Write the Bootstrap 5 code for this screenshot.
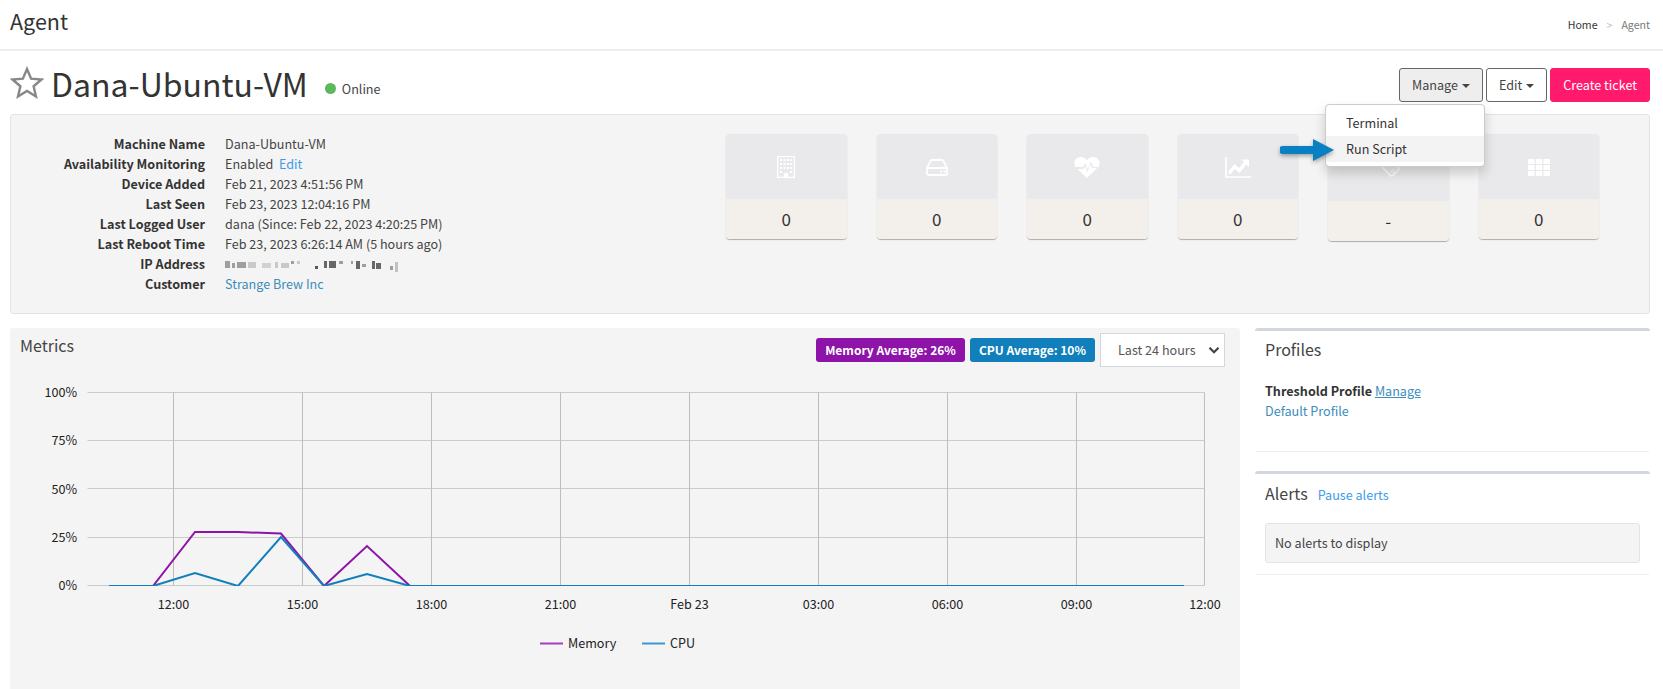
<!DOCTYPE html>
<html lang="en">
<head>
<meta charset="utf-8">
<title>Agent</title>
<link href="https://cdn.jsdelivr.net/npm/bootstrap@5.3.0/dist/css/bootstrap.min.css" rel="stylesheet">
<style>
html,body{height:689px;overflow:hidden}
body{font-family:"Noto Sans CJK SC","Noto Sans",sans-serif;font-size:12.6px;line-height:20px;color:#333;background:#fff}
a{text-decoration:none}
.top-head{height:51px;padding:0 13px 0 10px;border-bottom:2px solid #eee}
.top-title{font-size:21.5px;line-height:34px;font-weight:400;margin:0 0 8px;color:#333}
.crumbs{font-size:10.6px;color:#777}
.crumbs span{color:#bbb;margin:0 9px}
.crumbs b{font-weight:400;color:#333}
.page-body{padding:0 13px 0 10px}
.title-row{height:63px}
.host-name{font-size:32px;line-height:44px;font-weight:400;margin:0 0 0 7px;color:#333}
.state-dot{width:11px;height:11px;border-radius:50%;background:#5cb85c;margin:0 6px 0 17px}
.state-wrap{margin-top:12px;color:#444}
.tool-btn{font-size:12.6px;line-height:20px;padding:6px 12px;height:34px;border:1px solid #666;border-radius:3px;color:#444;background:#fff}
.tool-btn:hover{color:#444;background:#fff;border-color:#666}
.tool-btn.on{background:#eee}
.tool-btn.on:hover{background:#eee}
.tool-btn::after{border-top-color:#444;vertical-align:2px;margin-left:4px;border-width:4px 4px 0}
.ticket-btn{height:34px;padding:6px 12px;font-size:12.6px;line-height:20px;background:#ff1a6e;border:1px solid #ff1a6e;border-radius:3px;color:#fff}
.ticket-btn:hover{background:#ff1a6e;color:#fff;border-color:#ff1a6e}
.btn-cluster{gap:3px;position:relative;margin-top:5px}
.tool-menu{display:block;position:absolute;top:36px;right:165px;left:auto;width:160px;min-width:0;padding:5px 0 4px;border:1px solid #ccc;border-radius:4px;box-shadow:0 6px 12px rgba(0,0,0,.175);font-size:12.6px;margin:0;z-index:5}
.tool-menu .dropdown-item{padding:3px 20px;line-height:20px;height:26px;color:#333}
.tool-menu .dropdown-item.hot{background:#f3f3f3}
.point-arrow{position:absolute;left:-46px;top:33px;width:56px;height:24px;filter:drop-shadow(0 2px 2px rgba(0,0,0,.35))}
.info-panel{height:200px;background:#f4f4f4;border:1px solid #e3e3e3;border-radius:3px;padding:19px 50px 0 0}
.facts{width:700px}
.fact-row{height:20px}
.fact-key{width:194px;text-align:right;font-weight:600;color:#333;flex:none}
.fact-val{margin-left:20px;color:#444;white-space:nowrap}
.blue-a{color:#3c8dbc}
.bright-a{color:#3c9ce8}
.tiles{gap:30px;flex:1;justify-content:flex-end;align-items:flex-start}
.tile{width:120.5px;border-radius:4px;overflow:hidden;box-shadow:0 1px 1px rgba(0,0,0,.3);flex:none}
.tile-top{height:65px;background:#e9e9eb;color:#fff}
.tile-top svg{width:26px;height:26px}
.tile-num{height:40px;background:#f3efeb;font-size:17px;line-height:40px;text-align:center;color:#333}
.tile-tall .tile-top{height:67px}
.main-row{gap:15px;margin-top:14px}
.metrics-box{width:1230px;height:361px;background:#f4f4f4;border-radius:3px 3px 0 0;flex:none;padding:5px 15px 0 10px}
.box-title{font-size:16px;line-height:24px;font-weight:400;margin:0 0 8px;color:#444}
.badge-set{gap:5px}
.avg-badge{font-size:12px;font-weight:600;color:#fff;height:24px;line-height:24px;padding:0 9px;border-radius:3px;white-space:nowrap}
.avg-mem{background:#8e13a8}
.avg-cpu{background:#107fbb}
.range-pick{width:125px;height:34px;border:1px solid #d2d6de;border-radius:0;font-size:12.6px;padding:5px 12px 5px 17px;color:#555;background-color:#fff;margin-left:0;line-height:20px;flex:none;background-position:right 4px center;background-size:12px 12px;background-image:url("data:image/svg+xml,%3csvg xmlns='http://www.w3.org/2000/svg' viewBox='0 0 16 16'%3e%3cpath fill='none' stroke='%23444' stroke-width='3' d='M2 5l6 6 6-6'/%3e%3c/svg%3e")}
.chart-svg{display:block;margin:-5px 0 0 -20px}
.chart-svg text{font-family:"Noto Sans CJK SC","Noto Sans",sans-serif;font-size:12.6px;fill:#222}
.side-col{flex:1;min-width:0}
.side-card{border-top:3px solid #d2d6de;border-bottom:1px solid #eee;border-radius:3px;padding:0 10px}
.side-card.prof{height:124px}
.side-card.alrt{height:104px;margin-top:19px}
.side-head{font-size:16px;line-height:24px;font-weight:400;margin:0;color:#444}
.prof-top{margin-top:6px}
.prof-lines{margin-top:20px}
.alrt-top{margin-top:7px}
.pause-link{margin:4px 0 0 10px}
.none-box{background:#f4f4f4;border:1px solid #e3e3e3;border-radius:3px;height:40px;padding:9px 9px;color:#444;margin-top:18px}
.key-bold{font-weight:700;color:#333}
.u-line{text-decoration:underline}
.ip-blur{filter:blur(.6px)}
</style>
</head>
<body>
<header class="top-head d-flex justify-content-between align-items-center">
  <h1 class="top-title">Agent</h1>
  <div class="crumbs"><b>Home</b><span>&gt;</span>Agent</div>
</header>
<main class="page-body">
  <div class="title-row d-flex justify-content-between align-items-center">
    <div class="d-flex align-items-center">
      <svg width="34" height="34" viewBox="0 0 34 34" aria-hidden="true"><path d="M17 3l4.100 9.600 10.400.9-7.900 6.800 2.400 10.200L17 25l-9 5.500 2.400-10.200-7.900-6.800 10.400-.9z" fill="none" stroke="#888" stroke-width="2.400" stroke-linejoin="miter"/></svg>
      <h2 class="host-name">Dana-Ubuntu-VM</h2>
      <div class="d-flex align-items-center state-wrap"><span class="state-dot"></span>Online</div>
    </div>
    <div class="d-flex btn-cluster">
      <button class="btn tool-btn on dropdown-toggle" type="button">Manage</button>
      <button class="btn tool-btn dropdown-toggle" type="button">Edit</button>
      <button class="btn ticket-btn" type="button">Create ticket</button>
      <div class="dropdown-menu tool-menu">
        <a class="dropdown-item" href="#">Terminal</a>
        <a class="dropdown-item hot" href="#">Run Script</a>
        <svg class="point-arrow" viewBox="0 0 56 24" aria-hidden="true"><path d="M3 8h30V1l21 11-21 11v-7H3a4 4 0 0 1 0-8z" fill="#0a80c4"/></svg>
      </div>
    </div>
  </div>

  <section class="info-panel d-flex">
    <div class="facts">
      <div class="fact-row d-flex"><div class="fact-key">Machine Name</div><div class="fact-val">Dana-Ubuntu-VM</div></div>
      <div class="fact-row d-flex"><div class="fact-key">Availability Monitoring</div><div class="fact-val">Enabled &nbsp;<a class="bright-a" href="#">Edit</a></div></div>
      <div class="fact-row d-flex"><div class="fact-key">Device Added</div><div class="fact-val">Feb 21, 2023 4:51:56 PM</div></div>
      <div class="fact-row d-flex"><div class="fact-key">Last Seen</div><div class="fact-val">Feb 23, 2023 12:04:16 PM</div></div>
      <div class="fact-row d-flex"><div class="fact-key">Last Logged User</div><div class="fact-val">dana (Since: Feb 22, 2023 4:20:25 PM)</div></div>
      <div class="fact-row d-flex"><div class="fact-key">Last Reboot Time</div><div class="fact-val">Feb 23, 2023 6:26:14 AM (5 hours ago)</div></div>
      <div class="fact-row d-flex"><div class="fact-key">IP Address</div><div class="fact-val"><svg width="175" height="14" viewBox="0 0 175 14" aria-hidden="true" class="d-block mt-1 ip-blur"><g fill="#8a8a8a" opacity=".8"><rect x="0" y="3" width="5" height="7"/><rect x="7" y="5" width="3" height="5"/><rect x="12" y="4" width="9" height="6"/><rect x="23" y="4" width="8" height="6" opacity=".5"/><rect x="37" y="5" width="9" height="5" opacity=".4"/><rect x="50" y="4" width="3" height="6" opacity=".5"/><rect x="56" y="5" width="8" height="5" opacity=".5"/><rect x="66" y="3" width="3" height="3"/><rect x="72" y="3" width="3" height="3" opacity=".5"/><rect x="90" y="8" width="3" height="3" fill="#333"/><rect x="99" y="3" width="3" height="7" fill="#444"/><rect x="104" y="3" width="7" height="7" fill="#444"/><rect x="114" y="3" width="4" height="3"/><rect x="126" y="3" width="2" height="3"/><rect x="131" y="3" width="4" height="8" fill="#444"/><rect x="137" y="6" width="4" height="3"/><rect x="147" y="3" width="3" height="8" fill="#444"/><rect x="151" y="5" width="5" height="6" fill="#444"/><rect x="165" y="8" width="3" height="4"/><rect x="170" y="4" width="3" height="10" opacity=".6"/></g></svg></div></div>
      <div class="fact-row d-flex"><div class="fact-key">Customer</div><div class="fact-val"><a class="blue-a" href="#">Strange Brew Inc</a></div></div>
    </div>
    <div class="tiles d-flex">
      <div class="tile"><div class="tile-top d-flex align-items-center justify-content-center"><svg viewBox="0 0 26 26" aria-hidden="true"><path fill="currentColor" fill-rule="evenodd" d="M4 2h18v22H4zM5.300 3.300v19.400h5.500V19h4.400v3.700h5.500V3.300zM7 5h2v2H7zm3.500 0h2v2h-2zM14 5h2v2h-2zm3 0h2v2h-2zM7 9h2v2H7zm3.500 0h2v2h-2zM14 9h2v2h-2zm3 0h2v2h-2zM7 13h2v2H7zm3.500 0h2v2h-2zM14 13h2v2h-2zm3 0h2v2h-2zM7 17h2v2H7zm10 0h2v2h-2z"/></svg></div><div class="tile-num">0</div></div>
      <div class="tile"><div class="tile-top d-flex align-items-center justify-content-center"><svg viewBox="0 0 26 26" aria-hidden="true"><path fill="none" stroke="currentColor" stroke-width="1.800" d="M3 14h20M8 6h10a1.500 1.500 0 0 1 1.400 1L23 14v5a2 2 0 0 1-2 2H5a2 2 0 0 1-2-2v-5l3.600-7A1.500 1.500 0 0 1 8 6z"/><path fill="currentColor" d="M16 16.500h2v2h-2zM19.500 16.500h2v2h-2z"/></svg></div><div class="tile-num">0</div></div>
      <div class="tile"><div class="tile-top d-flex align-items-center justify-content-center"><svg viewBox="0 0 26 26" aria-hidden="true"><path fill="currentColor" d="M13 24L3.500 15h6l1.500-3 2.500 6 3-8 1.700 4h5z"/><path fill="currentColor" d="M1.300 13C-1 8 1.500 3 7 3c2.700 0 4.700 1.500 6 3.500C14.300 4.500 16.300 3 19 3c5.500 0 8 5 5.700 10h-5.300l-2.500-5.500-3.200 8-2.500-6-2.200 3.500z"/></svg></div><div class="tile-num">0</div></div>
      <div class="tile"><div class="tile-top d-flex align-items-center justify-content-center"><svg viewBox="0 0 26 26" aria-hidden="true"><path fill="none" stroke="currentColor" stroke-width="1.600" d="M1 3v20h25"/><path fill="currentColor" d="M3.500 17l6-7 4.500 4 5-6-2.500-2.500H24V13l-2.500-2.500-7 8.500-4.500-4-4.500 5H3.500z"/></svg></div><div class="tile-num">0</div></div>
      <div class="tile tile-tall"><div class="tile-top d-flex align-items-center justify-content-center"><svg viewBox="0 0 26 26" aria-hidden="true"><path fill="none" stroke="currentColor" stroke-width="1.600" d="M7 12l8 8a2.500 2.500 0 0 0 3.500 0l4.500-4.500a2.500 2.500 0 0 0 0-3.500l-8-8"/><circle cx="18" cy="16" r="1.500" fill="none" stroke="currentColor" stroke-width="1"/></svg></div><div class="tile-num">-</div></div>
      <div class="tile"><div class="tile-top d-flex align-items-center justify-content-center"><svg viewBox="0 0 26 26" aria-hidden="true"><path fill="currentColor" d="M2 5h6.500v5H2zm7.800 0h6.500v5H9.800zM17.500 5H24v5h-6.500zM2 11h6.500v5H2zm7.800 0h6.500v5H9.800zm7.700 0H24v5h-6.500zM2 17h6.500v5H2zm7.800 0h6.500v5H9.800zm7.700 0H24v5h-6.500z"/></svg></div><div class="tile-num">0</div></div>
    </div>
  </section>

  <div class="main-row d-flex">
    <section class="metrics-box">
      <div class="d-flex justify-content-between align-items-start">
        <h3 class="box-title">Metrics</h3>
        <div class="d-flex align-items-center badge-set">
          <span class="avg-badge avg-mem">Memory Average: 26%</span>
          <span class="avg-badge avg-cpu">CPU Average: 10%</span>
          <select class="form-select range-pick"><option>Last 24 hours</option></select>
        </div>
      </div>
      <svg class="chart-svg" width="1230" height="320" viewBox="0 0 1230 320" role="img">
        <defs><clipPath id="plotClip"><rect x="80" y="0" width="1130" height="224"/></clipPath></defs>
        <g stroke="#cbcbcb" stroke-width="1" fill="none">
          <path d="M87.500 30.500H1204.500M87.500 78.500H1204.500M87.500 126.500H1204.500M87.500 175.500H1204.500M87.500 223.500H1204.500"/>
        </g>
        <g stroke="#bdbdbd" stroke-width="1" fill="none">
          <path d="M173.500 30.500V223.500M302.500 30.500V223.500M431.500 30.500V223.500M560.500 30.500V223.500M689.500 30.500V223.500M818.500 30.500V223.500M947.500 30.500V223.500M1076.500 30.500V223.500M1204.500 30.500V223.500"/>
        </g>
        <g text-anchor="end"><text x="77" y="35">100%</text><text x="77" y="83">75%</text><text x="77" y="132">50%</text><text x="77" y="180">25%</text><text x="77" y="228">0%</text></g>
        <g text-anchor="middle"><text x="173.500" y="247">12:00</text><text x="302.500" y="247">15:00</text><text x="431.500" y="247">18:00</text><text x="560.500" y="247">21:00</text><text x="689.500" y="247">Feb 23</text><text x="818.500" y="247">03:00</text><text x="947.500" y="247">06:00</text><text x="1076.500" y="247">09:00</text><text x="1205" y="247">12:00</text></g>
        <g clip-path="url(#plotClip)">
          <polyline fill="none" stroke="#8e13a8" stroke-width="2" points="109,224 153,224 195,170 238,170 281,171.500 324,224 367,184 410,224 1184,224"/>
          <polyline fill="none" stroke="#107fbb" stroke-width="2" points="109,224 153,224 195,211 238,224 281,175 324,224 367,212 410,224 1184,224"/>
        </g>
        <path d="M540 281.500h23" stroke="#a63cc0" stroke-width="2"/><text x="568" y="285.500">Memory</text>
        <path d="M642 281.500h23" stroke="#3a98d0" stroke-width="2"/><text x="670" y="285.500">CPU</text>
      </svg>
    </section>
    <aside class="side-col">
      <section class="side-card prof">
        <h3 class="side-head prof-top">Profiles</h3>
        <div class="prof-lines"><span class="key-bold">Threshold Profile</span> <a class="blue-a u-line" href="#">Manage</a><br><a class="blue-a" href="#">Default Profile</a></div>
      </section>
      <section class="side-card alrt">
        <div class="d-flex align-items-center alrt-top"><h3 class="side-head">Alerts</h3><a class="bright-a pause-link" href="#">Pause alerts</a></div>
        <div class="none-box">No alerts to display</div>
      </section>
    </aside>
  </div>
</main>
</body>
</html>
